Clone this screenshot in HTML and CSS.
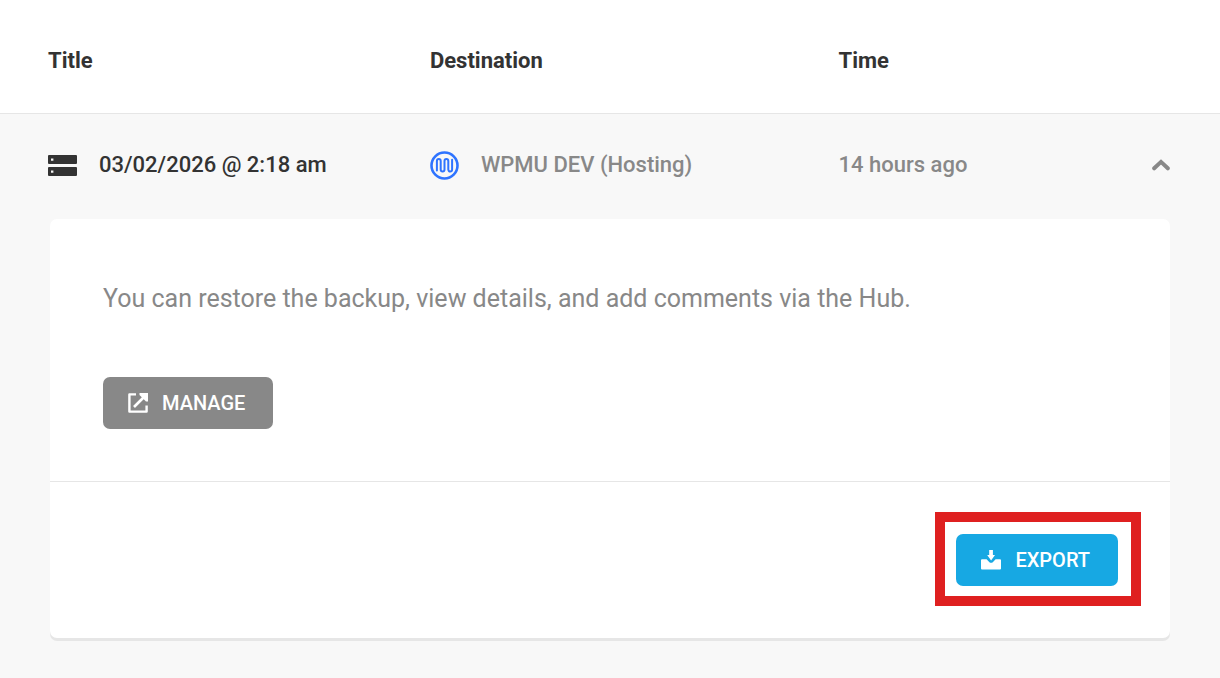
FILE: index.html
```html
<!DOCTYPE html>
<html lang="en">
<head>
    <meta charset="UTF-8">
    <meta name="viewport" content="width=device-width, initial-scale=1.0">
    <title>Backups</title>
    <link rel="stylesheet" href="styles.css">
</head>
<body>
    <table class="backups">
        <thead>
            <tr>
                <th class="col-title" scope="col">Title</th>
                <th class="col-destination" scope="col">Destination</th>
                <th class="col-time" scope="col">Time</th>
            </tr>
        </thead>
        <tbody>
            <tr class="backup-row">
                <td>
                    <div class="cell title">
                        <svg class="icon-storage" viewBox="0 0 29 21" aria-hidden="true">
                            <path fill="#333" fill-rule="evenodd" d="M1 0h27q1 0 1 1v7q0 1-1 1H1q-1 0-1-1V1q0-1 1-1zM3 3.4v2.4h2.4V3.4zM1 12h27q1 0 1 1v7q0 1-1 1H1q-1 0-1-1v-7q0-1 1-1zM3 15.4v2.4h2.4v-2.4z"/>
                        </svg>
                        <span>03/02/2026 @ 2:18 am</span>
                    </div>
                </td>
                <td>
                    <div class="cell">
                        <svg class="icon-logo" viewBox="0 0 29 29" aria-hidden="true">
                            <circle cx="14.5" cy="14.5" r="13" fill="none" stroke="#2f74ff" stroke-width="2.6"/>
                            <path fill="none" stroke="#2f74ff" stroke-width="2" stroke-linecap="round" d="M6.9 19.6V10a1.9 1.9 0 0 1 3.8 0v8.6a1.9 1.9 0 0 0 3.8 0V10a1.9 1.9 0 0 1 3.8 0v8.6a1.9 1.9 0 0 0 3.8 0V8.8"/>
                        </svg>
                        <span>WPMU DEV (Hosting)</span>
                    </div>
                </td>
                <td>
                    <div class="cell time">
                        <span>14 hours ago</span>
                        <button class="toggle" type="button" aria-label="Collapse backup" aria-expanded="true">
                            <svg viewBox="0 0 18 12" aria-hidden="true">
                                <path fill="none" stroke="#888" stroke-width="4" stroke-linecap="round" d="M2.2 9.3 9 2.9l6.8 6.4"/>
                            </svg>
                        </button>
                    </div>
                </td>
            </tr>
            <tr>
                <td class="details" colspan="3">
                    <div class="card">
                        <div class="card-body">
                            <p>You can restore the backup, view details, and add comments via the Hub.</p>
                            <button class="btn btn-gray" type="button">
                                <svg viewBox="0 0 20 20" aria-hidden="true">
                                    <path fill="none" stroke="#fff" stroke-width="2.4" stroke-linejoin="round" d="M8 1.4H1.4v17.2h17.2V12.5"/>
                                    <path fill="none" stroke="#fff" stroke-width="2.6" d="M6 14 17 3"/>
                                    <path fill="#fff" d="M11.5 0H20v8.5h-2L11.5 2z"/>
                                </svg>
                                Manage
                            </button>
                        </div>
                        <div class="card-footer">
                            <div class="highlight">
                                <button class="btn btn-blue" type="button">
                                    <svg viewBox="0 0 20 20" aria-hidden="true">
                                        <path fill="#fff" d="M8.2 0h3.7v5H14l-3.9 5.4L6.2 5h2z"/>
                                        <path fill="#fff" d="M1 9.2h4.6l2.8 3q1.7 1 3.4 0l2.8-3H19q1 0 1 1v8.4q0 1-1 1H1q-1 0-1-1v-8.4q0-1 1-1z"/>
                                    </svg>
                                    Export
                                </button>
                            </div>
                        </div>
                    </div>
                </td>
            </tr>
        </tbody>
    </table>
</body>
</html>
```

FILE: styles.css
```css
body {
    font-family: Roboto, sans-serif;
    margin: 0;
    background-color: #f8f8f8;
    color: #888;
}

.backups {
    width: 100%;
    table-layout: fixed;
    border-collapse: separate;
    border-spacing: 0;
    font-size: 22px;
    font-weight: 500;
    line-height: 32px;
}

th {
    height: 114px;
    padding: 17px 0 8px 20px;
    box-sizing: border-box;
    background-color: #fff;
    border-bottom: 1px solid #e6e6e6;
    color: #333;
    font-weight: 700;
    text-align: left;
}

.col-title {
    width: 33.6%;
}

.col-destination {
    width: 33.5%;
}

.backup-row td {
    height: 105px;
    padding: 0 0 3px 20px;
    box-sizing: border-box;
}

th:first-child,
.backup-row td:first-child {
    padding-left: 48px;
}

.cell {
    display: flex;
    align-items: center;
    gap: 22px;
}

.title {
    color: #333;
}

.time {
    justify-content: space-between;
    padding-right: 50px;
}

.icon-storage {
    width: 29px;
    height: 21px;
}

.icon-logo {
    width: 29px;
    height: 29px;
}

.toggle {
    padding: 0;
    border: 0;
    background: none;
    cursor: pointer;
}

.toggle svg {
    display: block;
    width: 18px;
    height: 12px;
}

.details {
    padding: 0 50px 36px;
}

.card {
    background-color: #fff;
    border-radius: 7px;
    box-shadow: 0 3px 0 #e6e6e6;
}

.card-body {
    padding: 54px 53px 52px;
}

.card-body p {
    margin: 0 0 52px;
    font-size: 25px;
    font-weight: 400;
    line-height: 52px;
}

.card-footer {
    display: flex;
    justify-content: flex-end;
    padding: 52px;
    border-top: 1px solid #e6e6e6;
}

.btn {
    display: flex;
    align-items: center;
    gap: 14px;
    height: 52px;
    padding: 0 28px 0 25px;
    border: 0;
    border-radius: 7px;
    color: #fff;
    font-family: inherit;
    font-size: 20px;
    font-weight: 500;
    text-transform: uppercase;
    cursor: pointer;
}

.btn svg {
    width: 20px;
    height: 20px;
}

.btn-gray {
    background-color: #888;
}

.btn-blue {
    background-color: #17a8e3;
}

.highlight {
    position: relative;
}

/* red frame around the export button */
.highlight::after {
    content: "";
    position: absolute;
    inset: -22px -23px -20px -21px;
    border: 10px solid #df2020;
    pointer-events: none;
}
```
